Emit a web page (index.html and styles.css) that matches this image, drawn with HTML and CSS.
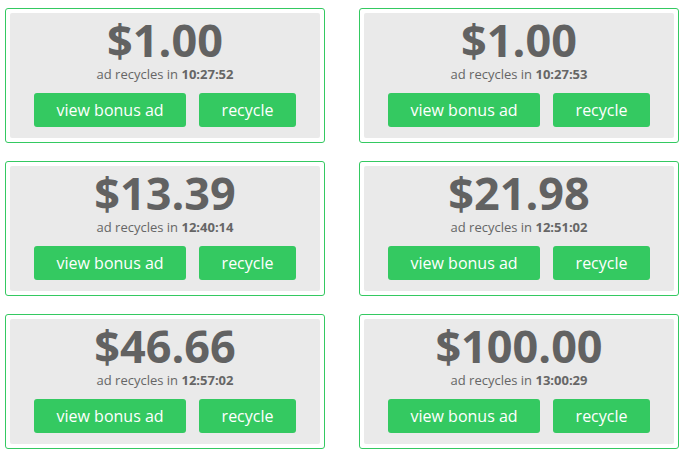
FILE: index.html
```html
<!DOCTYPE html>
<html>
<head>
<meta charset="utf-8">
<link rel="stylesheet" href="styles.css">
</head>
<body>
<div class="grid">
  <div class="card"><div class="inner">
    <div class="price">$1.00</div>
    <div class="sub">ad recycles in <b>10:27:52</b></div>
    <div class="actions"><button class="btn">view bonus ad</button><button class="btn">recycle</button></div>
  </div></div>
  <div class="card"><div class="inner">
    <div class="price">$1.00</div>
    <div class="sub">ad recycles in <b>10:27:53</b></div>
    <div class="actions"><button class="btn">view bonus ad</button><button class="btn">recycle</button></div>
  </div></div>
  <div class="card"><div class="inner">
    <div class="price">$13.39</div>
    <div class="sub">ad recycles in <b>12:40:14</b></div>
    <div class="actions"><button class="btn">view bonus ad</button><button class="btn">recycle</button></div>
  </div></div>
  <div class="card"><div class="inner">
    <div class="price">$21.98</div>
    <div class="sub">ad recycles in <b>12:51:02</b></div>
    <div class="actions"><button class="btn">view bonus ad</button><button class="btn">recycle</button></div>
  </div></div>
  <div class="card"><div class="inner">
    <div class="price">$46.66</div>
    <div class="sub">ad recycles in <b>12:57:02</b></div>
    <div class="actions"><button class="btn">view bonus ad</button><button class="btn">recycle</button></div>
  </div></div>
  <div class="card"><div class="inner">
    <div class="price">$100.00</div>
    <div class="sub">ad recycles in <b>13:00:29</b></div>
    <div class="actions"><button class="btn">view bonus ad</button><button class="btn">recycle</button></div>
  </div></div>
</div>
</body>
</html>
```
FILE: styles.css
```css
html, body {
  margin: 0;
  padding: 0;
  background: #ffffff;
  font-family: "Open Sans", "Liberation Sans", sans-serif;
}
.grid {
  display: grid;
  grid-template-columns: 320px 320px;
  column-gap: 34px;
  row-gap: 18px;
  padding: 8px 3px 0 5px;
}
.card {
  border: 1px solid #34c961;
  border-radius: 3px;
  padding: 4px;
  box-sizing: border-box;
  height: 135px;
}
.inner {
  background: #eaeaea;
  border-radius: 2px;
  height: 125px;
  box-sizing: border-box;
  padding-top: 5px;
  display: flex;
  flex-direction: column;
  align-items: center;
  color: #666666;
}
.price {
  font-size: 45px;
  font-weight: 700;
  line-height: 44px;
  color: #626262;
}
.sub {
  font-size: 13px;
  line-height: 18px;
  margin-top: 3px;
}
.sub b {
  font-weight: 700;
}
.actions {
  display: flex;
  gap: 13px;
  margin-top: 10px;
}
.btn {
  background: #34c961;
  color: #ffffff;
  border: none;
  border-radius: 3px;
  height: 34px;
  padding: 0 22.5px;
  font-family: "Open Sans", "Liberation Sans", sans-serif;
  font-size: 16px;
  line-height: 34px;
}
```
